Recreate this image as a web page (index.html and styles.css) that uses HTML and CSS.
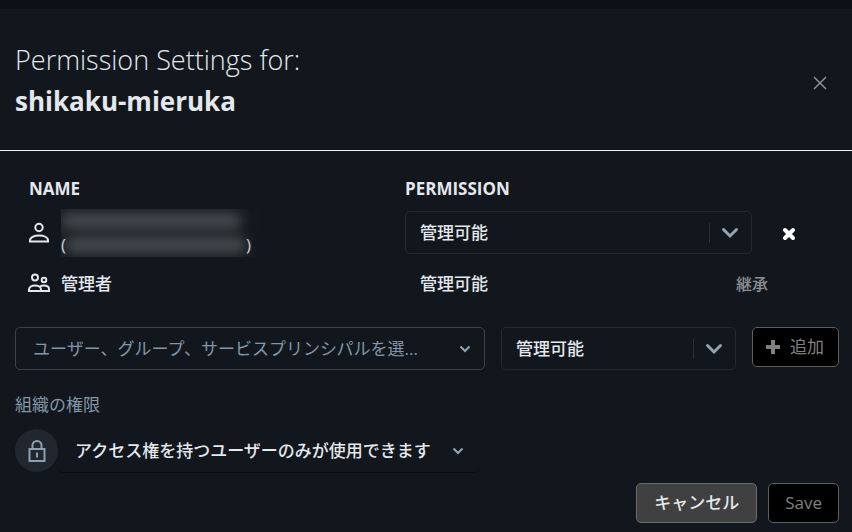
FILE: index.html
```html
<!doctype html>
<html lang="ja">
	<head>
		<meta charset="utf-8">
		<title>Permission Settings</title>
		<link rel="stylesheet" href="styles.css">
	</head>
	<body>

		<div class="dialog" role="dialog" aria-labelledby="title">

			<div class="header">
				<h1 id="title">Permission Settings for:<br><strong>shikaku-mieruka</strong></h1>
				<button type="button" class="close" aria-label="Close">
					<svg width="14" height="14" viewBox="0 0 14 14"><path d="M1 1l12 12M13 1L1 13" /></svg>
				</button>
			</div>

			<form class="content">
				<table class="permissions">
					<colgroup>
						<col>
						<col class="col-permission">
						<col class="col-action">
					</colgroup>
					<thead>
						<tr>
							<th scope="col" class="name-head">NAME</th>
							<th scope="col">PERMISSION</th>
							<td></td>
						</tr>
					</thead>
					<tbody>
						<tr class="user">
							<td>
								<div class="principal">
									<svg class="line-icon" width="22" height="22" viewBox="0 0 22 22"><circle cx="11" cy="5.500" r="3.700" /><path d="M2 19.500v-1.200c0-3 4-4.800 9-4.800s9 1.800 9 4.800v1.200z" /></svg>
									<div class="redacted">
										<div><span class="smudge"></span></div>
										<div>(<span class="smudge"></span>)</div>
									</div>
								</div>
							</td>
							<td>
								<div class="select">
									<select aria-label="Permission"><option>管理可能</option></select>
									<span class="arrow">
										<svg width="18" height="12" viewBox="0 0 18 12"><path d="M2.500 2.500L9 9l6.500-6.500" /></svg>
									</span>
								</div>
							</td>
							<td>
								<button type="button" class="remove" aria-label="Remove">
									<svg width="14" height="14" viewBox="0 0 14 14"><path d="M3 3l8 8M11 3l-8 8" /></svg>
								</button>
							</td>
						</tr>
						<tr class="group">
							<td>
								<div class="principal">
									<svg class="line-icon" width="22" height="22" viewBox="0 0 22 22"><circle cx="7" cy="4.500" r="3" /><circle cx="16" cy="7" r="2.300" /><path d="M1 18v-1.500c0-2.500 2.700-4 6-4s6 1.500 6 4V18zM12 13.500c1-.7 2.500-1 4-1 2.800 0 5 1.300 5 3.500v2h-8" /></svg>
									管理者
								</div>
							</td>
							<td class="fixed">管理可能</td>
							<td class="inherited"><span>継承</span></td>
						</tr>
					</tbody>
				</table>

				<div class="add-row">
					<div class="select picker">
						<select aria-label="Principal"><option>ユーザー、グループ、サービスプリンシパルを選...</option></select>
						<svg class="chevron" width="12" height="8" viewBox="0 0 12 8"><path d="M1.500 1.500L6 6l4.500-4.500" /></svg>
					</div>
					<div class="select">
						<select aria-label="New permission"><option>管理可能</option></select>
						<span class="arrow">
							<svg width="18" height="12" viewBox="0 0 18 12"><path d="M2.500 2.500L9 9l6.500-6.500" /></svg>
						</span>
					</div>
					<button type="button" class="button add" disabled>
						<svg width="16" height="16" viewBox="0 0 16 16"><path d="M8 1v14M1 8h14" /></svg>
						追加
					</button>
				</div>

				<label class="label" for="access">組織の権限</label>
				<div class="access-row">
					<span class="lock">
						<svg width="18" height="22" viewBox="0 0 18 22"><path d="M1.500 9h15v12h-15zM4.500 9V5.500a4.500 4.500 0 0 1 9 0V9M9 12.500v5" /></svg>
					</span>
					<div class="select access">
						<select id="access"><option>アクセス権を持つユーザーのみが使用できます</option></select>
						<svg class="chevron" width="12" height="8" viewBox="0 0 12 8"><path d="M1.500 1.500L6 6l4.500-4.500" /></svg>
					</div>
				</div>

				<div class="footer">
					<button type="button" class="button cancel">キャンセル</button>
					<button type="submit" class="button" disabled>Save</button>
				</div>
			</form>

		</div>

	</body>
</html>
```
FILE: styles.css
```css
* {
	box-sizing: border-box;
	margin: 0;
	padding: 0;
}

body {
	background: #0c1015;
	color: #e4e7eb;
	font-family: "Open Sans", "Noto Sans CJK JP", sans-serif;
	font-size: 17px;
	line-height: 24px;
}

button,
select {
	color: inherit;
	font: inherit;
}

svg {
	display: block;
	flex: none;
	fill: none;
	stroke: currentColor;
}

.dialog {
	margin-top: 9px;
	min-height: calc(100vh - 9px);
	background: #12171e;
}

.header {
	display: flex;
	justify-content: space-between;
	align-items: center;
	padding: 30px 20px 28px 15px;
	border-bottom: 1px solid #f0f2f4;
}
	.header h1 {
		font-size: 27px;
		line-height: 41px;
		font-weight: 300;
	}
	.header strong {
		font-size: 26px;
		font-weight: 700;
	}

.close {
	margin-top: 4px;
	padding: 5px;
	border: 0;
	background: none;
	color: #8d9094;
	cursor: pointer;
}
	.close svg {
		stroke-width: 1.500;
	}

.content {
	padding: 26px 13px 0 15px;
}

.permissions {
	width: 100%;
	table-layout: fixed;
	border-collapse: collapse;
	font-weight: 500;
}
	.col-permission {
		width: 347px;
	}
	.col-action {
		width: 87px;
	}
	.permissions th {
		font-size: 17px;
		font-weight: 700;
		text-align: left;
	}
	.permissions .name-head {
		padding-left: 14px;
	}
	.user td {
		height: 63px;
	}
	.group td {
		height: 40px;
	}
	.group .fixed {
		padding-left: 15px;
	}
	.inherited span {
		display: block;
		margin-left: -16px;
		color: #8d9094;
		font-size: 16px;
	}

.principal {
	display: flex;
	align-items: center;
	gap: 11px;
	padding-left: 13px;
}
	.line-icon {
		stroke-width: 2;
	}

/* hidden mail address */
.redacted {
	width: 200px;
	overflow: hidden;
	background: linear-gradient(to right, #1a1f24 85%, #12171e);
	font-size: 17px;
}
	.redacted div {
		display: flex;
		align-items: center;
		height: 24px;
	}
	.smudge {
		width: 180px;
		height: 16px;
		border-radius: 8px;
		background: #45494d;
		filter: blur(6px);
	}

.remove {
	margin-left: 30px;
	border: 0;
	background: none;
	color: white;
	vertical-align: middle;
	cursor: pointer;
}
	.remove svg {
		stroke-width: 4;
		stroke-linecap: round;
	}

/* the arrow is stacked over the select in one grid cell */
.select {
	display: grid;
	align-items: center;
	min-width: 0;
}
	.select > * {
		grid-area: 1 / 1;
	}
	.select select {
		width: 100%;
		height: 43px;
		padding: 0 56px 0 14px;
		border: 1px solid #242a31;
		border-radius: 5px;
		background: #12171e;
		font-weight: 500;
		appearance: none;
	}

.arrow {
	justify-self: end;
	display: flex;
	align-items: center;
	height: 20px;
	padding: 0 13px 0 11px;
	border-left: 1px solid #2a3037;
	color: #92a4b3;
	pointer-events: none;
}
	.arrow svg {
		stroke-width: 3;
		stroke-linecap: round;
	}

.chevron {
	justify-self: end;
	margin-right: 14px;
	color: #92a4b3;
	stroke-width: 2;
	pointer-events: none;
}

.add-row {
	display: grid;
	grid-template-columns: 2fr 1fr auto;
	gap: 16px;
	margin-top: 23px;
}
	.picker select {
		padding: 0 40px 0 17px;
		border-color: #37444f;
		color: #8396a5;
		font-weight: 400;
		text-overflow: ellipsis;
	}

.button {
	display: flex;
	align-items: center;
	justify-content: center;
	height: 40px;
	padding: 0 16px;
	border: 1px solid #6b6b6b;
	border-radius: 5px;
	cursor: pointer;
}
.button:disabled {
	border-color: #5f5f5f;
	background: black;
	color: #808080;
	cursor: default;
}
.add {
	gap: 9px;
	padding: 0 14px 0 12px;
}
	.add svg {
		stroke-width: 4;
	}
.cancel {
	padding: 0 17px;
	background: #404040;
	font-weight: 500;
}

.label {
	display: block;
	margin-top: 23px;
	color: #8396a5;
}

.access-row {
	display: flex;
	margin-top: 12px;
}
	.lock {
		display: flex;
		align-items: center;
		justify-content: center;
		width: 43px;
		height: 43px;
		border-radius: 50%;
		background: #20272e;
		color: #8ba0b0;
	}
	.lock svg {
		stroke-width: 2;
	}
	.access select {
		padding: 0 48px 0 17px;
		border: 0;
		box-shadow: 0 1px 0 #090c10;
	}
	.access .chevron {
		margin-right: 16px;
	}

.footer {
	display: flex;
	justify-content: flex-end;
	gap: 11px;
	margin-top: 11px;
}
```
